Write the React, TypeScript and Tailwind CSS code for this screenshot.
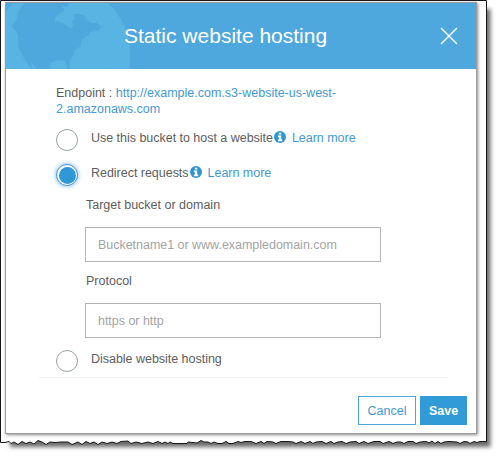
import React from "react";

function Globe() {
  return (
    <svg className="absolute left-0 top-0" width="130" height="66" viewBox="0 0 130 66" aria-hidden="true">
      <path d="M7 0H102C116 13 124 31 124 49Q124.500 58 123.500 66H0V9Q2 4 7 0Z" fill="#58b4e3" />
      <path
        d="M18 0H62L63 3 56 4 59 7 53 11 49 15 49 18 57 20 61 23 65 26 67 22 66 18 69 15 67 11 73 11 79 13 80 17 86 20 91 20 95 24 92 28 84 29 84 32 79 34 75 38 75 43 69 47 67 53 63 58 64 66H61L60 59 56 57 48 58 44 61 45 66H30L24 57 27 66H25L18 55 12 43 12 31 6 23 11 16 12 9 16 3Z"
        fill="#4ea8dd"
      />
    </svg>
  );
}

function TornFrame() {
  return (
    <svg className="absolute inset-0" width="500" height="458" viewBox="0 0 500 458" aria-hidden="true">
      <defs>
        <filter id="soft" x="-10%" y="-10%" width="120%" height="120%">
          <feGaussianBlur stdDeviation="2" />
        </filter>
      </defs>
      <path d="M10 9H490.500V447H10Z" fill="#6a6a6a" filter="url(#soft)" />
      <path
        d="M.5 .5H486.500V441.500H480L477 442.500 474 441.500 470 443.500 468 442 464 441.500 460 443.500 457 442 449 441.500 444 442 441 443.500 438 441.500 435 443.500 432 441 429 443 426 441.500 420 442 416 443.500 413 441.500 408 441.500 404 443.500 401 442 397 442 393 443.500 389 441.500 383 443.500 380 441.500 374 441.500 368 443.500 364 441.500 359 443.500 356 441.500 350 442 346 443.500 342 441.500 338 442 334 443.500 331 441.500 326 443.500 322 441.500 316 442 313 443.500 310 441.500 305 443.500 301 441.500 296 443.500 293 442 288 441.500 281 441.500 276 443.500 273 442 267 441.500 264 443.500 261 441.500 256 443.500 251 441.500 245 441.500 241 442.500 238 441.500 233 443.500 229 443.500 226 441.500 222 443.500 218 443.500 214 442 211 443.500 208 442 204 442 201 440.500 197 443 188 442 187 443.500 173 443.500 170 442 168 443.500 165 442 162 443.500 158 441.500 153 443.500 148 442 142 443.500 136 442 131 443.500 128 441 121 441.500 117 443.500 112 442 107 443.500 102 442 98 444.500 94 442 90 443.500 86 441.500 82 444.500 78 442 72 444.500 68 442 61 442 55 442.500 50 442 46 444.500 42 442 38 440.500 34 444 30 442 26 443.500 22 441.500 18 444.500 14 442 11 443.500 9 441.500 5 442.500H.5Z"
        fill="white"
        stroke="#171419"
      />
    </svg>
  );
}

function Info() {
  return (
    <svg className="mb-[2px] ml-px mr-[6px] shrink-0" width="12" height="12" viewBox="0 0 12 12" aria-hidden="true">
      <circle cx="6" cy="6" r="6" fill="#2f96d4" />
      <path d="M4.800 1.700H7.200V3.600H4.800ZM4 4.600H7.200V8.500H8.200V10.200H4V8.500H4.900V6.200H4Z" fill="white" />
    </svg>
  );
}

function Radio({ on = false }: { on?: boolean }) {
  return (
    <span
      className={
        on
          ? "flex size-[22px] shrink-0 items-center justify-center rounded-full border border-[#4a91dc] bg-white shadow-[0_0_5px_#77b3f5]"
          : "size-[22px] shrink-0 rounded-full border border-[#98a2a2] bg-white"
      }
    >
      {on && <span className="size-[17px] rounded-full bg-[#2f98d7]" />}
    </span>
  );
}

function Option({ label, on, link }: { label: string; on?: boolean; link?: boolean }) {
  return (
    <div className="flex h-[22px] items-start">
      <Radio on={on} />
      <span className="ml-[13px] flex h-[17px] items-center whitespace-nowrap tracking-[-0.025px]">
        {label}
        {link && (
          <>
            <Info />
            <a className="text-[#4398d5]">Learn more</a>
          </>
        )}
      </span>
    </div>
  );
}

function Field({ label, hint }: { label: string; hint: string }) {
  return (
    <label className="block h-[76px]">
      <span className="block h-4 pl-px leading-4">{label}</span>
      <input
        placeholder={hint}
        className="mt-[14px] block h-[35px] w-[296px] border border-[#b4b6b6] bg-white px-[12px] text-[12.5px] tracking-[-0.025px] outline-none placeholder:text-[#a3a3a3]"
      />
    </label>
  );
}

export default function App() {
  return (
    <main className="relative h-[458px] w-[500px] overflow-hidden bg-white font-['Liberation_Sans',Arial,sans-serif] text-[12.5px] leading-4 text-[#5d5d5d]">
      <TornFrame />
      <div className="relative pl-[5px] pt-[2px]">
        <section className="flex h-[432px] w-[472px] flex-col border border-[#999b9c] bg-white shadow-[1px_1px_3px_#888]">
          <header className="relative flex h-[66px] shrink-0 items-center bg-[#4ea8dd]">
            <Globe />
            <h1 className="relative ml-[118px] -mt-px whitespace-nowrap text-[21px] leading-6 text-white">Static website hosting</h1>
            <button className="ml-auto mr-[18px]" aria-label="Close">
              <svg width="18" height="18" viewBox="0 0 18 18" stroke="white" strokeWidth="1.400">
                <path d="M1 1 17 17M17 1 1 17" />
              </svg>
            </button>
          </header>
          <div className="pl-[50px] pt-4">
            <p>
              Endpoint : <a className="text-[#4398d5]">http://example.com.s3-website-us-west-<br />2.amazonaws.com</a>
            </p>
            <div className="mt-3 flex flex-col gap-[13px]">
              <Option label="Use this bucket to host a website" link />
              <Option label="Redirect requests" on link />
            </div>
            <div className="ml-[29px] mt-[11px]">
              <Field label="Target bucket or domain" hint="Bucketname1 or www.exampledomain.com" />
              <Field label="Protocol" hint="https or http" />
            </div>
            <div className="mt-px">
              <Option label="Disable website hosting" />
            </div>
          </div>
          <div className="ml-[33px] mr-[28px] mt-[5px] h-px shrink-0 bg-[#f1f1f1]" />
          <footer className="mt-[18px] flex justify-end gap-[4px] pr-[9px]">
            <button className="h-[29px] w-[58px] border border-[#4ba5d9] text-[#4398d5]">Cancel</button>
            <button className="h-[29px] w-[47px] bg-[#319bd8] font-bold text-white">Save</button>
          </footer>
        </section>
      </div>
    </main>
  );
}
